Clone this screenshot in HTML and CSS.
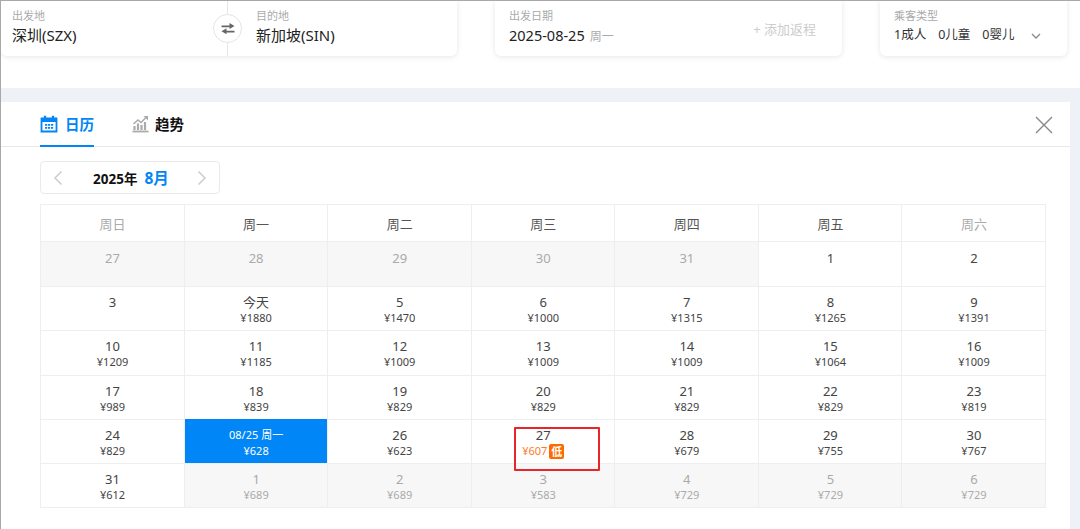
FILE: index.html
```html
<!DOCTYPE html>
<html lang="zh-CN">
<head>
<meta charset="utf-8">
<title>日历</title>
<link rel="stylesheet" href="styles.css">
</head>
<body>
<div class="page">
  <header class="search">
    <section class="card route">
      <div class="field from"><div class="label">出发地</div><div class="value">深圳(SZX)</div></div>
      <div class="field to"><div class="label">目的地</div><div class="value">新加坡(SIN)</div></div>
      <div class="swap">
        <svg width="16" height="14" viewBox="0 0 16 14"><path d="M1.500 3.500h8V1l5 3-5 3V5.200h-8z M14.500 8.800h-8V6.300l-5 3 5 3v-1.800h8z" fill="#666"/></svg>
      </div>
    </section>
    <section class="card date">
      <div class="field"><div class="label">出发日期</div><div class="value datev">2025-08-25<span class="week">周一</span></div></div>
      <div class="add">+ 添加返程</div>
    </section>
    <section class="card pax">
      <div class="field"><div class="label">乘客类型</div><div class="value small"><span>1成人</span><span>0儿童</span><span>0婴儿</span></div></div>
      <svg class="chev" width="10" height="6" viewBox="0 0 10 6"><path d="M1 1l4 4 4-4" fill="none" stroke="#888" stroke-width="1.300"/></svg>
    </section>
  </header>
  <main class="panel">
    <nav class="tabs">
      <div class="tab active">
        <svg width="18" height="18" viewBox="0 0 18 18"><path d="M1.500 3.500h15v13h-15z" fill="none" stroke="#0086f6" stroke-width="1.800"/><path d="M1.500 3.500h15v3.500h-15z" fill="#0086f6"/><path d="M5 .8v3 M13 .8v3" stroke="#0086f6" stroke-width="2.200"/><path d="M5 9h2.200v1.800H5z M8 9h2.200v1.800H8z M11 9h2.200v1.800H11z M5 12h2.200v1.800H5z M8 12h2.200v1.800H8z M11 12h2.200v1.800H11z" fill="#0086f6"/></svg>
        <span>日历</span>
      </div>
      <div class="tab trend">
        <svg width="17" height="18" viewBox="0 0 17 18"><path d="M.5 16.500h16" stroke="#aaa" stroke-width="1.800"/><path d="M2.500 15v-4 M6 15V8.500 M9.500 15v-5 M13 15V7" stroke="#aaa" stroke-width="2.200"/><path d="M1.500 9L6 5l3 2.500L14.500 2" fill="none" stroke="#aaa" stroke-width="1.500"/><path d="M11.500 1h4.500v4.500z" fill="#aaa"/></svg>
        <span>趋势</span>
      </div>
      <svg class="close" width="18" height="18" viewBox="0 0 18 18"><path d="M1 1l16 16 M17 1L1 17" stroke="#888" stroke-width="1.400"/></svg>
    </nav>
    <div class="pager">
      <svg width="10" height="16" viewBox="0 0 10 16"><path d="M8.500 1.500L2 8l6.500 6.500" fill="none" stroke="#ccc" stroke-width="1.500"/></svg>
      <div class="month"><span>2025年</span><span class="m">8月</span></div>
      <svg width="10" height="16" viewBox="0 0 10 16"><path d="M1.500 1.500L8 8l-6.500 6.500" fill="none" stroke="#ccc" stroke-width="1.500"/></svg>
    </div>
    <div class="cal">
      <div class="head off">周日</div><div class="head">周一</div><div class="head">周二</div><div class="head">周三</div><div class="head">周四</div><div class="head">周五</div><div class="head off">周六</div>

      <div class="cell past"><b>27</b></div><div class="cell past"><b>28</b></div><div class="cell past"><b>29</b></div><div class="cell past"><b>30</b></div><div class="cell past"><b>31</b></div><div class="cell"><b>1</b></div><div class="cell"><b>2</b></div>

      <div class="cell"><b>3</b></div><div class="cell"><b>今天</b><i>¥1880</i></div><div class="cell"><b>5</b><i>¥1470</i></div><div class="cell"><b>6</b><i>¥1000</i></div><div class="cell"><b>7</b><i>¥1315</i></div><div class="cell"><b>8</b><i>¥1265</i></div><div class="cell"><b>9</b><i>¥1391</i></div>

      <div class="cell"><b>10</b><i>¥1209</i></div><div class="cell"><b>11</b><i>¥1185</i></div><div class="cell"><b>12</b><i>¥1009</i></div><div class="cell"><b>13</b><i>¥1009</i></div><div class="cell"><b>14</b><i>¥1009</i></div><div class="cell"><b>15</b><i>¥1064</i></div><div class="cell"><b>16</b><i>¥1009</i></div>

      <div class="cell"><b>17</b><i>¥989</i></div><div class="cell"><b>18</b><i>¥839</i></div><div class="cell"><b>19</b><i>¥829</i></div><div class="cell"><b>20</b><i>¥829</i></div><div class="cell"><b>21</b><i>¥829</i></div><div class="cell"><b>22</b><i>¥829</i></div><div class="cell"><b>23</b><i>¥819</i></div>

      <div class="cell"><b>24</b><i>¥829</i></div><div class="cell sel"><b>08/25 周一</b><i>¥628</i></div><div class="cell"><b>26</b><i>¥623</i></div><div class="cell low"><b>27</b><i><span>¥607</span><em>低</em></i><div class="mark"></div></div><div class="cell"><b>28</b><i>¥679</i></div><div class="cell"><b>29</b><i>¥755</i></div><div class="cell"><b>30</b><i>¥767</i></div>

      <div class="cell"><b>31</b><i>¥612</i></div><div class="cell past"><b>1</b><i>¥689</i></div><div class="cell past"><b>2</b><i>¥689</i></div><div class="cell past"><b>3</b><i>¥583</i></div><div class="cell past"><b>4</b><i>¥729</i></div><div class="cell past"><b>5</b><i>¥729</i></div><div class="cell past"><b>6</b><i>¥729</i></div>
    </div>
  </main>
</div>
</body>
</html>
```
FILE: styles.css
```css
* { box-sizing: border-box; }
html, body { margin: 0; padding: 0; height: 100%; overflow: hidden; }
body { font-family: "Noto Sans", "Noto Sans CJK SC", sans-serif; color: #333; }

.page {
  width: 1080px; height: 529px;
  display: flex; flex-direction: column;
  background: #eef1f6;
  border-top: 1px solid #a8a8a8;
  border-left: 1px solid #a8a8a8;
  overflow: hidden;
}

.search {
  height: 87px; flex: none;
  background: #fff;
  display: flex; align-items: flex-start;
}
.card {
  height: 55px; background: #fff;
  border-radius: 0 0 6px 6px;
  box-shadow: 0 1px 5px rgba(30, 50, 90, .12);
  display: flex; position: relative;
}
.route { width: 456px; }
.date { width: 347px; margin-left: 38px; padding-left: 14px; }
.pax { width: 187px; margin-left: 38px; padding-left: 14px; }

.field { padding-top: 7px; }
.from { width: 227px; padding-left: 11px; border-right: 1px solid #e6e6e6; }
.to { padding-left: 28px; }
.label { font-size: 11px; line-height: 16px; color: #aaa; }
.value { font-size: 15px; line-height: 23px; color: #222; white-space: nowrap; }
.datev { font-size: 14.500px; }
.value.small { font-size: 12.500px; line-height: 22px; display: flex; gap: 12px; color: #333; }
.week { font-size: 12px; color: #aaa; margin-left: 5px; }

.swap {
  position: absolute; left: 212px; top: 13px;
  width: 29px; height: 29px; border-radius: 50%;
  background: #fff; border: 1px solid #e4e4e4;
  display: flex; align-items: center; justify-content: center;
}
.add { margin-left: auto; margin-right: 26px; padding-top: 19px; font-size: 13px; line-height: 18px; color: #ccc; }
.chev { margin-left: 17px; margin-top: 32px; }

.panel {
  flex: 1; margin-top: 14px; margin-right: 10px;
  background: #fff; padding-left: 39px;
}
.tabs {
  height: 45px; margin-left: -39px; padding-left: 39px; padding-right: 17px;
  border-bottom: 1px solid #e8e8e8;
  display: flex; align-items: stretch; gap: 38px;
}
.tab {
  width: 54px; height: 45px;
  display: flex; align-items: center; gap: 7px;
  font-size: 14.500px; font-weight: 700; color: #111;
  white-space: nowrap;
  padding-bottom: 2px;
}
.tab.trend { gap: 6px; }
.tab.active { color: #0086f6; border-bottom: 2px solid #0086f6; padding-bottom: 0; }
.close { margin-left: auto; align-self: center; margin-top: 1px; }

.pager {
  width: 180px; height: 33px; margin-top: 14px;
  border: 1px solid #eaeaea; border-radius: 4px;
  display: flex; align-items: center; justify-content: space-between;
  padding: 0 12px;
}
.month { display: flex; align-items: center; gap: 7px; margin-left: 2px; font-size: 13.500px; font-weight: 700; color: #111; }
.month .m { font-size: 15.500px; color: #0086f6; }

.cal {
  width: 1006px; margin-top: 10px;
  display: grid;
  grid-template-columns: repeat(7, 1fr);
  grid-template-rows: 37px 45px repeat(5, 44.250px);
  border-top: 1px solid #eee;
  border-left: 1px solid #eee;
}
.head {
  display: flex; align-items: center; justify-content: center;
  font-size: 13px; color: #555;
  border-right: 1px solid #eee;
  border-bottom: 1px solid #eee;
  padding-left: .5px;
}
.head.off { color: #aaa; }
.cell {
  position: relative;
  border-right: 1px solid #eee;
  border-bottom: 1px solid #eee;
  padding-top: 6px;
  padding-left: .5px;
  text-align: center;
}
.cell:nth-child(-n+14) { padding-top: 7px; }
.cell b { display: block; font-weight: 400; font-size: 13px; line-height: 18px; color: #444; }
.cell i { display: block; font-style: normal; font-size: 11px; line-height: 14px; color: #444; }
.past { background: #f7f7f7; }
.past b, .past i { color: #aaa; }
.sel { background: #0086f6; margin-top: -1px; padding-top: 7px; }
.sel b { font-size: 11px; color: #fff; }
.sel i { color: #fff; }
.low { z-index: 1; }
.low i { display: flex; align-items: center; justify-content: center; gap: 2px; color: #ff7a1f; }
.low em {
  width: 15px; height: 15px; border-radius: 2px;
  background: #ff6a00; color: #fff;
  font-style: normal; font-weight: 700; font-size: 11px; line-height: 15px;
}
.mark {
  position: absolute; left: 42px; top: 7px;
  width: 86px; height: 44px;
  border: 2px solid #e8262a; border-radius: 1px;
}
```
